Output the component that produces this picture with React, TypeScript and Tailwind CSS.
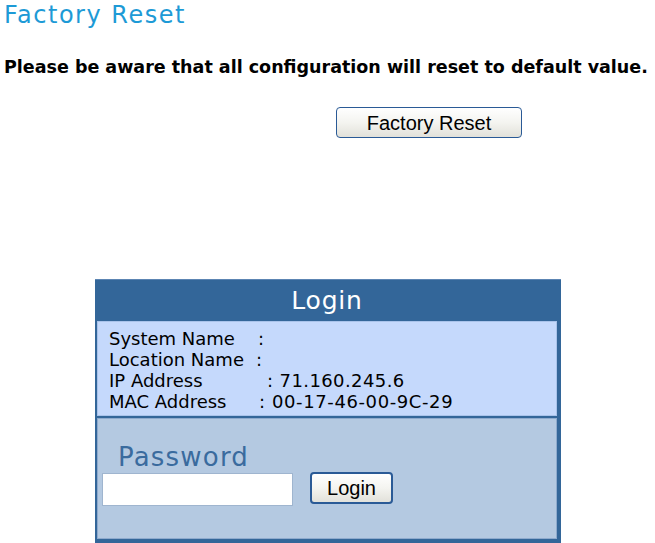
import React from "react";

export default function App() {
  const verdana = { fontFamily: '"DejaVu Sans", Verdana, sans-serif' };
  const arial = { fontFamily: '"Liberation Sans", Arial, sans-serif' };
  return (
    <div className="w-[655px] h-[543px] bg-white overflow-hidden relative">
      <div className="pl-[4px] pt-[2px]">
        <h1 className="text-[24px] leading-[27px] tracking-[1.5px] text-[#1d9ad6] font-normal" style={verdana}>
          Factory Reset
        </h1>
        <p className="mt-[28px] text-[17.5px] leading-[21px] font-bold text-black whitespace-nowrap" style={verdana}>
          Please be aware that all configuration will reset to default value.
        </p>
        <div className="mt-[29px] pl-[332px]">
          <button
            className="w-[186px] h-[31px] rounded-[4px] border border-[#2a5a96] bg-gradient-to-b from-white via-[#f4f4f0] to-[#e2e1da] text-[20px] leading-none text-black"
            style={arial}
          >
            Factory Reset
          </button>
        </div>
      </div>

      <div className="mt-[141px] ml-[95px] w-[466px] bg-[#336699] pl-[2px] pr-[4px] pb-[4px] border-t border-[#5c85b3]">
        <div className="h-[41px] flex items-center justify-center text-white text-[25px] tracking-[0.8px]" style={verdana}>
          Login
        </div>
        <div className="h-[95px] bg-[#c5d9fc] border border-[#a9c3ea] pl-[11px] pt-[6px] text-[18px] leading-[21px] text-black" style={verdana}>
          <div className="flex whitespace-pre"><span className="w-[149px]">System Name</span><span>:</span></div>
          <div className="flex whitespace-pre"><span className="w-[147px]">Location Name</span><span>:</span></div>
          <div className="flex whitespace-pre"><span className="w-[158px]">IP Address</span><span className="tracking-[0.4px]">: 71.160.245.6</span></div>
          <div className="flex whitespace-pre"><span className="w-[150px]">MAC Address</span><span className="tracking-[0.6px]">: 00-17-46-00-9C-29</span></div>
        </div>
        <div className="mt-[2px] h-[121px] bg-[#b4c9e1] border border-[#8eaacd] pt-[23px]">
          <div className="pl-[20px] text-[26px] leading-[30px] tracking-[1.2px] text-[#3a6b9e]" style={verdana}>
            Password
          </div>
          <div className="flex items-start mt-[1px] pl-[4px]">
            <input
              type="password"
              className="w-[191px] h-[33px] bg-white border border-[#9fb5cf] outline-none"
            />
            <button
              className="ml-[17px] -mt-[1px] w-[83px] h-[32px] rounded-[4px] border-2 border-[#2a5a96] bg-gradient-to-b from-white via-[#f4f4f0] to-[#e2e1da] text-[20px] leading-none text-black"
              style={arial}
            >
              Login
            </button>
          </div>
        </div>
      </div>
    </div>
  );
}
